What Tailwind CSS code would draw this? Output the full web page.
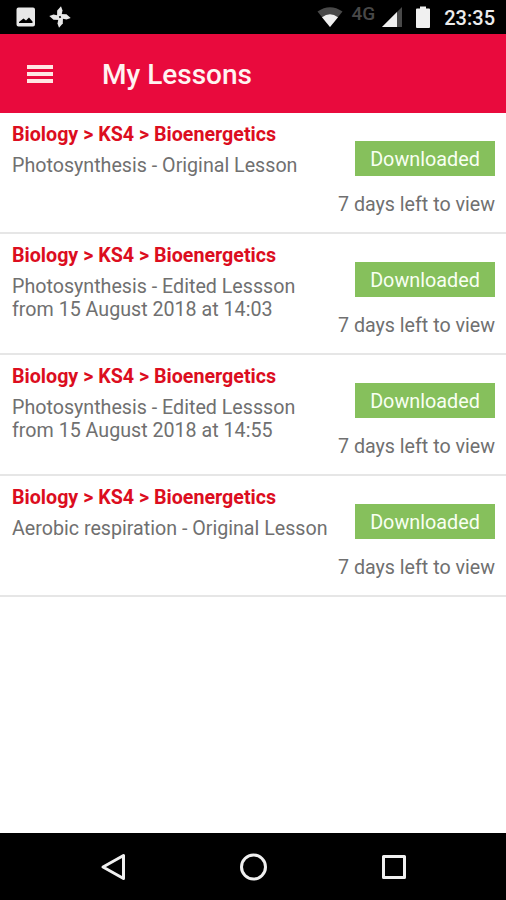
<!DOCTYPE html>
<html lang="en">
<head>
<meta charset="utf-8">
<title>My Lessons</title>
<script src="https://cdn.jsdelivr.net/npm/@tailwindcss/browser@4"></script>
</head>
<body class="bg-white">
<div class="flex h-[900px] w-[506px] flex-col overflow-hidden bg-white font-[Roboto,sans-serif] text-[19.67px] leading-[23px] text-[#707070]">
  <div class="flex h-[34px] shrink-0 items-center bg-black pl-[16px] pr-[11px] text-[#ececec]">
    <svg class="h-[20px] w-[20px]" viewBox="0 0 20 20" fill="#e8e8e8"><path fill-rule="evenodd" d="M2.500 .5h14.500a2 2 0 0 1 2 2v15a2 2 0 0 1-2 2H2.500a2 2 0 0 1-2-2v-15a2 2 0 0 1 2-2ZM3 16h13.500v-1.500l-3.500-4-3 3-2.500-2L3 15Z"/></svg>
    <svg class="ml-[13px] h-[22px] w-[22px]" viewBox="0 0 22 22" fill="#e8e8e8"><path d="M8 11.500L8.200 4.500 12 .3 13.500 4.500 12.500 9.300Z"/><path d="M8 11.500L8.200 4.500 12 .3 13.500 4.500 12.500 9.300Z" transform="rotate(90 11 11)"/><path d="M8 11.500L8.200 4.500 12 .3 13.500 4.500 12.500 9.300Z" transform="rotate(180 11 11)"/><path d="M8 11.500L8.200 4.500 12 .3 13.500 4.500 12.500 9.300Z" transform="rotate(270 11 11)"/></svg>
    <svg class="ml-auto h-[20px] w-[26px]" viewBox="0 0 26 20"><path fill="#494949" d="M.5 4.500Q13-4 25.500 4.500L13 20Z"/><path fill="#f0f0f0" d="M5 10.200Q13 4.200 21 10.200L13 20Z"/></svg>
    <span class="ml-[9px] -mt-[7px] text-[19px] font-medium leading-[20px] text-[#484848]">4G</span>
    <svg class="ml-[7px] h-[20px] w-[20px]" viewBox="0 0 20 20"><path fill="#494949" d="M20 0v20H0Z"/><path fill="#f0f0f0" d="M15 5v15H0Z"/></svg>
    <svg class="ml-[14px] h-[22px] w-[14px]" viewBox="0 0 14 22" fill="#f0f0f0"><path d="M4 .5h6v2h3a1 1 0 0 1 1 1V21a1 1 0 0 1-1 1H1a1 1 0 0 1-1-1V3.500a1 1 0 0 1 1-1h3Z"/></svg>
    <span class="ml-[14px] mt-[2px] text-[20px] font-medium">23:35</span>
  </div>
  <header class="flex h-[79px] shrink-0 items-center bg-[#e90a3d] pt-[2px] text-[#fff3f1]">
    <div class="ml-[27px] flex w-[26px] -mt-[2px] flex-col gap-[3px]"><i class="h-[4px] bg-[#ffe6e3]"></i><i class="h-[4px] bg-[#ffe6e3]"></i><i class="h-[4px] bg-[#ffe6e3]"></i></div>
    <h1 class="ml-[49px] text-[28px] font-medium leading-[32px]">My Lessons</h1>
  </header>
  <main class="flex-1">
    <section class="flex h-[121px] justify-between border-b-2 border-[#e6e6e6] pl-[12px] pr-[11px]">
      <div class="pt-[10px]"><h2 class="font-bold text-[#dc0d20]">Biology &gt; KS4 &gt; Bioenergetics</h2><p class="mt-[8px] whitespace-nowrap">Photosynthesis - Original Lesson</p></div>
      <div class="flex shrink-0 flex-col items-end pt-[28px]"><span class="flex h-[35px] w-[140px] items-center justify-center bg-[#86c05c] pt-[2px] text-[19.8px] text-[#f8fff2]">Downloaded</span><p class="mt-[17px]">7 days left to view</p></div>
    </section>
    <section class="flex h-[121px] justify-between border-b-2 border-[#e6e6e6] pl-[12px] pr-[11px]">
      <div class="pt-[10px]"><h2 class="font-bold text-[#dc0d20]">Biology &gt; KS4 &gt; Bioenergetics</h2><p class="mt-[8px] whitespace-nowrap">Photosynthesis - Edited Lessson<br>from 15 August 2018 at 14:03</p></div>
      <div class="flex shrink-0 flex-col items-end pt-[28px]"><span class="flex h-[35px] w-[140px] items-center justify-center bg-[#86c05c] pt-[2px] text-[19.8px] text-[#f8fff2]">Downloaded</span><p class="mt-[17px]">7 days left to view</p></div>
    </section>
    <section class="flex h-[121px] justify-between border-b-2 border-[#e6e6e6] pl-[12px] pr-[11px]">
      <div class="pt-[10px]"><h2 class="font-bold text-[#dc0d20]">Biology &gt; KS4 &gt; Bioenergetics</h2><p class="mt-[8px] whitespace-nowrap">Photosynthesis - Edited Lessson<br>from 15 August 2018 at 14:55</p></div>
      <div class="flex shrink-0 flex-col items-end pt-[28px]"><span class="flex h-[35px] w-[140px] items-center justify-center bg-[#86c05c] pt-[2px] text-[19.8px] text-[#f8fff2]">Downloaded</span><p class="mt-[17px]">7 days left to view</p></div>
    </section>
    <section class="flex h-[121px] justify-between border-b-2 border-[#e6e6e6] pl-[12px] pr-[11px]">
      <div class="pt-[10px]"><h2 class="font-bold text-[#dc0d20]">Biology &gt; KS4 &gt; Bioenergetics</h2><p class="mt-[8px] whitespace-nowrap">Aerobic respiration - Original Lesson</p></div>
      <div class="flex shrink-0 flex-col items-end pt-[28px]"><span class="flex h-[35px] w-[140px] items-center justify-center bg-[#86c05c] pt-[2px] text-[19.8px] text-[#f8fff2]">Downloaded</span><p class="mt-[17px]">7 days left to view</p></div>
    </section>
  </main>
  <nav class="flex h-[67px] shrink-0 items-center bg-black pl-[100px]">
    <svg class="h-[28px] w-[26px]" viewBox="0 0 26 28" fill="none" stroke="#f0f0f0" stroke-width="3" stroke-linejoin="round"><path d="M23.500 2.500v23L3 14Z"/></svg>
    <svg class="ml-[113px] h-[28px] w-[28px]" viewBox="0 0 28 28" fill="none" stroke="#f0f0f0" stroke-width="3"><circle cx="14.500" cy="14" r="12"/></svg>
    <svg class="ml-[114px] h-[26px] w-[26px]" viewBox="0 0 26 26" fill="none" stroke="#f0f0f0" stroke-width="3" stroke-linejoin="round"><path d="M2.500 2.500h21v21h-21Z"/></svg>
  </nav>
</div>
</body>
</html>
